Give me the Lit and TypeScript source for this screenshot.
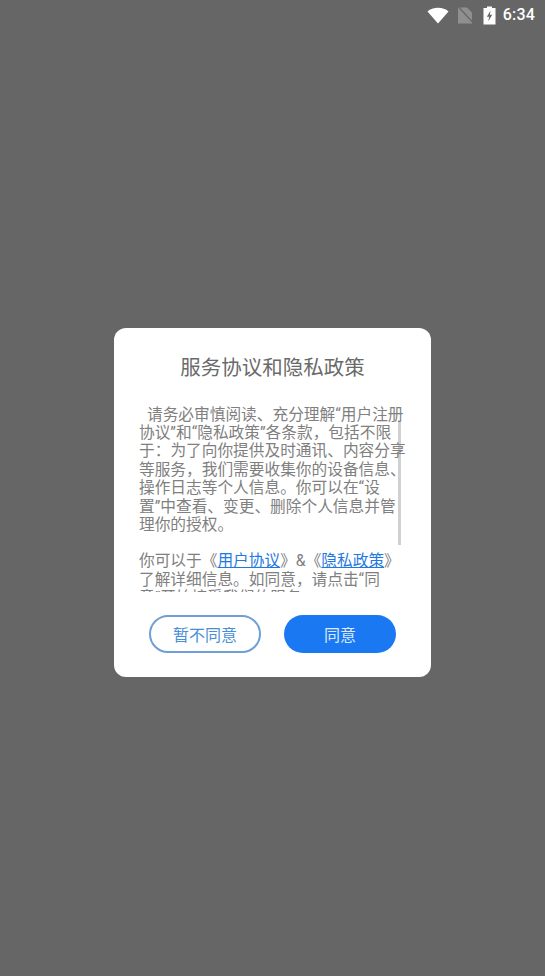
import { LitElement, html, css } from "lit";
import { customElement } from "lit/decorators.js";

const COMMA = "\uFF0C";
const COLON = "\uFF1A";

@customElement("app-root")
export class AppRoot extends LitElement {
  static styles = css`
    :host {
      display: flex;
      flex-direction: column;
      width: 545px;
      height: 976px;
      background: #666666;
      font-family: Roboto, "Noto Sans CJK SC", sans-serif;
      overflow: hidden;
    }
    .status {
      height: 30px;
      flex: none;
      display: flex;
      align-items: center;
      justify-content: flex-end;
      padding-right: 10px;
      color: #fff;
      gap: 0;
    }
    .status svg { display: block; flex: none; }
    .wifi { margin-right: 8px; }
    .nosim { margin-right: 10px; }
    .batt { margin-right: 7px; }
    .time { font-size: 16px; line-height: 30px; font-weight: 500; letter-spacing: 0.2px; }
    .stage {
      flex: 1;
      display: flex;
      align-items: center;
      justify-content: center;
      padding-bottom: 2px;
    }
    .dialog {
      width: 317px;
      height: 349px;
      box-sizing: border-box;
      background: #fff;
      border-radius: 12px;
      display: flex;
      flex-direction: column;
      padding: 25px 0 24px 25px;
    }
    .title {
      margin: 0;
      padding-right: 25px;
      text-align: center;
      font-size: 20.5px;
      line-height: 30px;
      font-weight: 400;
      color: #6a6a6a;
    }
    .scroller {
      position: relative;
      isolation: isolate;
      margin-top: 23px;
      height: 186px;
      overflow: hidden;
      font-size: 15.7px;
      line-height: 18.4px;
      color: #808080;
    }
    .line { white-space: nowrap; }
    .indent { padding-left: 8px; }
    .gap { height: 18px; }
    a { color: #1f7adf; text-decoration: underline; }
    .thumb {
      position: absolute;
      z-index: -1;
      left: 259px;
      top: 14px;
      width: 3px;
      height: 125px;
      background: #d0d0d0;
    }
    .actions {
      margin-top: 23px;
      display: flex;
      gap: 23px;
      padding-left: 10px;
    }
    button {
      width: 112px;
      height: 38px;
      box-sizing: border-box;
      border-radius: 19px;
      font-family: inherit;
      font-size: 16px;
      padding: 0;
    }
    .ghost { background: #fff; border: 2px solid #6f9fd6; color: #4a8ed8; }
    .primary { background: #1a78f2; border: none; color: #dbe9fb; }
  `;

  render() {
    return html`
      <div class="status">
        <svg class="wifi" width="22" height="17" viewBox="0 0 22 17"><path d="M0.5 4.5C3.2 2 6.8 0.8 11 0.8S18.8 2 21.5 4.5L11 16.5Z" fill="#fff"/></svg>
        <svg class="nosim" width="16" height="17" viewBox="0 0 15 17"><path d="M0.5 0.5H9.5L14.5 5.5V16.5H0.5Z" fill="#8f8f8f"/><path d="M1 0L15 15" stroke="#666" stroke-width="1.3"/></svg>
        <svg class="batt" width="13" height="19" viewBox="0 0 13 19"><path d="M4 0.5H9V2H12.5V18.5H0.5V2H4Z" fill="#fff"/><path d="M7.6 4.5L3.8 10.8H6.2L5.2 15.5L9.2 8.8H6.8Z" fill="#666"/></svg>
        <span class="time">6:34</span>
      </div>
      <div class="stage">
        <section class="dialog">
          <h1 class="title">服务协议和隐私政策</h1>
          <div class="scroller">
            <div class="thumb"></div>
            <div class="line indent">请务必审慎阅读、充分理解“用户注册</div>
            <div class="line">协议”和“隐私政策”各条款${COMMA}包括不限</div>
            <div class="line">于${COLON}为了向你提供及时通讯、内容分享</div>
            <div class="line">等服务${COMMA}我们需要收集你的设备信息、</div>
            <div class="line">操作日志等个人信息。你可以在“设</div>
            <div class="line">置”中查看、变更、删除个人信息并管</div>
            <div class="line">理你的授权。</div>
            <div class="gap"></div>
            <div class="line">你可以于《<a>用户协议</a>》&《<a>隐私政策</a>》</div>
            <div class="line">了解详细信息。如同意${COMMA}请点击“同</div>
            <div class="line">意”开始接受我们的服务。</div>
          </div>
          <div class="actions">
            <button class="ghost">暂不同意</button>
            <button class="primary">同意</button>
          </div>
        </section>
      </div>
    `;
  }
}
